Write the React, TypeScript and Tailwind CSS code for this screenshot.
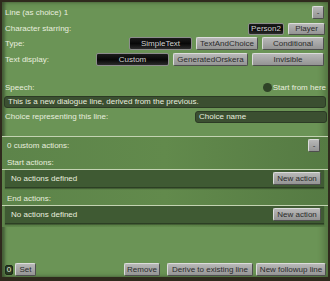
import React from "react";

const font = "font-['Liberation_Sans',Arial,sans-serif]";

const LightButton = ({ children, className = "" }: { children: React.ReactNode; className?: string }) => (
  <div
    className={`flex items-center justify-center rounded-[2px] border border-t-[#dcdcdc] border-l-[#dcdcdc] border-r-[#4e4e4e] border-b-[#4e4e4e] bg-gradient-to-b from-[#b8b8b8] to-[#949494] text-[#2b2b2b] leading-none ${className}`}
  >
    {children}
  </div>
);

const DarkButton = ({ children, className = "" }: { children: React.ReactNode; className?: string }) => (
  <div
    className={`flex items-center justify-center rounded-[2px] border border-[#8c8c8c] bg-gradient-to-b from-[#1c1c1c] via-[#080808] to-[#2c2c2c] text-[#d2d2d2] leading-none ${className}`}
  >
    {children}
  </div>
);

const ActionBox = () => (
  <div className="h-[18px] flex items-center justify-between pl-[6px] pr-[3px] bg-[#3f5a33] border-b border-[#2c3f24] shadow-[0_1px_1px_rgba(0,0,0,0.3)]">
    <span>No actions defined</span>
    <LightButton className="w-[48px] h-[13px]">New action</LightButton>
  </div>
);

export default function App() {
  return (
    <div className={`w-[330px] h-[281px] bg-[#2f2a1d] pt-[2px] px-[2px] pb-[4px] ${font} text-[8px] text-[#e8eedf]`}>
      <div className="h-full flex flex-col bg-[#6b9456] shadow-[inset_3px_0_3px_rgba(0,0,0,0.35),inset_-4px_0_6px_rgba(40,60,30,0.35)]">
        {/* header */}
        <div className="h-[13px] mt-[4px] flex items-center justify-between pl-[3px] pr-[4px]">
          <span>Line (as choice) 1</span>
          <LightButton className="w-[12px] h-[13px]">-</LightButton>
        </div>
        <div className="h-[12px] mt-[4px] flex items-center justify-between pl-[3px] pr-[3px]">
          <span>Character starring:</span>
          <div className="flex gap-[4px]">
            <DarkButton className="w-[36px] h-[12px]">Person2</DarkButton>
            <LightButton className="w-[37px] h-[12px]">Player</LightButton>
          </div>
        </div>
        <div className="h-[13px] mt-[2px] flex items-center justify-between pl-[3px] pr-[4px]">
          <span>Type:</span>
          <div className="flex gap-[4px]">
            <DarkButton className="w-[63px] h-[13px]">SimpleText</DarkButton>
            <LightButton className="w-[62px] h-[13px]">TextAndChoice</LightButton>
            <LightButton className="w-[62px] h-[13px]">Conditional</LightButton>
          </div>
        </div>
        <div className="h-[13px] mt-[3px] flex items-center justify-between pl-[3px] pr-[4px]">
          <span>Text display:</span>
          <div className="flex gap-[4px]">
            <DarkButton className="w-[73px] h-[13px]">Custom</DarkButton>
            <LightButton className="w-[75px] h-[13px]">GeneratedOrskera</LightButton>
            <LightButton className="w-[72px] h-[13px]">Invisible</LightButton>
          </div>
        </div>

        {/* speech */}
        <div className="h-[11px] mt-[16px] flex items-center justify-between pl-[3px] pr-[2px]">
          <span>Speech:</span>
          <div className="flex items-center">
            <div className="w-[9px] h-[9px] rounded-full bg-[#2f4327]" />
            <span className="ml-[1px]">Start from here</span>
          </div>
        </div>
        <div className="h-[12px] mt-[3px] mx-[2px] flex items-center pl-[3px] rounded-[3px] bg-[#3b4f31] border border-[#2c3b25]">
          This is a new dialogue line, derived from the previous.
        </div>
        <div className="h-[12px] mt-[3px] flex items-center justify-between pl-[3px] pr-[1px]">
          <span>Choice representing this line:</span>
          <div className="w-[132px] h-[12px] flex items-center pl-[3px] rounded-[3px] bg-[#3b4f31] border border-[#2c3b25]">
            Choice name
          </div>
        </div>

        {/* custom actions */}
        <div className="mt-[13px] border-t border-[#c3d3b2] bg-gradient-to-r from-[#5d844a] via-[#628a4c] to-[#557a43] pb-[3px]">
          <div className="h-[13px] mt-[2px] flex items-center justify-between pl-[5px] pr-[8px]">
            <span>0 custom actions:</span>
            <LightButton className="w-[12px] h-[13px]">-</LightButton>
          </div>
          <div className="h-[13px] mt-[4px] flex items-center pl-[5px]">Start actions:</div>
          <div className="border-t border-[#c3d3b2] pl-[3px] pr-[4px]">
            <ActionBox />
          </div>
          <div className="h-[13px] mt-[4px] flex items-center pl-[5px]">End actions:</div>
          <div className="border-t border-[#c3d3b2] pl-[3px] pr-[4px]">
            <ActionBox />
          </div>
        </div>

        {/* footer */}
        <div className="mt-auto mb-[1px] h-[13px] flex items-center pl-[3px] pr-[2px]">
          <div className="w-[8px] h-[10px] flex items-center justify-center rounded-[2px] bg-[#2a3a22] border border-[#1c2818]">0</div>
          <LightButton className="ml-[2px] w-[21px] h-[13px]">Set</LightButton>
          <LightButton className="ml-auto w-[36px] h-[13px]">Remove</LightButton>
          <LightButton className="ml-[7px] w-[86px] h-[13px]">Derive to existing line</LightButton>
          <LightButton className="ml-[3px] w-[70px] h-[13px]">New followup line</LightButton>
        </div>
      </div>
    </div>
  );
}
